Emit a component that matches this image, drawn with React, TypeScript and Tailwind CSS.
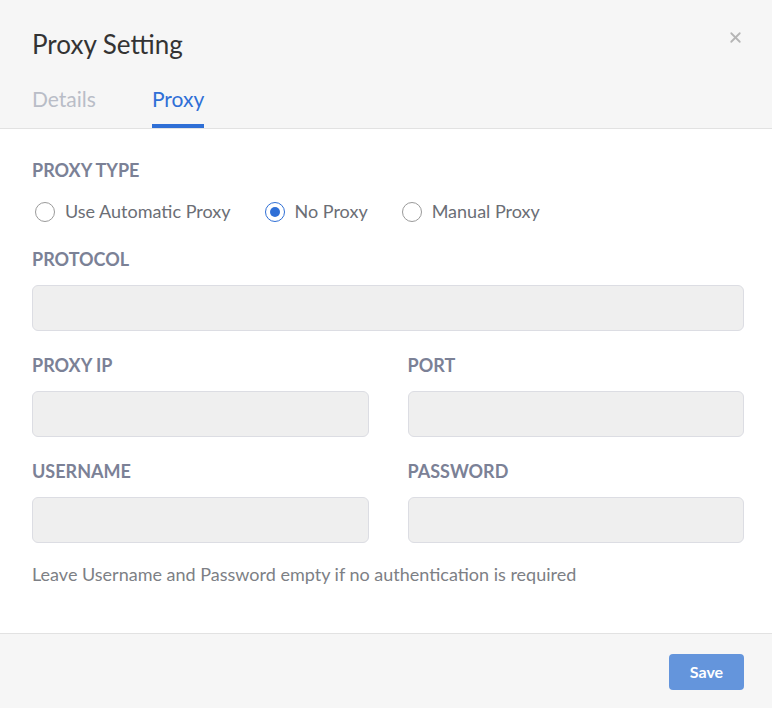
import { X } from "lucide-react";

function Radio({ label, checked }: { label: string; checked?: boolean }) {
    return (
        <label className="flex items-center gap-[10px]">
            {checked ? (
                <span className="flex size-[20px] items-center justify-center rounded-full border-[1.5px] border-[#2f6fd6] bg-white">
                    <span className="size-[10px] rounded-full bg-[#2f6fd6]" />
                </span>
            ) : (
                <span className="size-[20px] rounded-full border border-[#9a9a9a] bg-white" />
            )}
            <span className="text-[18px] leading-[27px] text-[#6b6e75]">{label}</span>
        </label>
    )
}

function Field({ label, top }: { label: string; top: string }) {
    return (
        <div className={"flex flex-col " + top}>
            <div className="text-[18px] font-bold text-[#7b8196] leading-[20px]">{label}</div>
            <div className="mt-[16px] h-[46px] rounded-[6px] border border-[#dcdde3] bg-[#efefef]" />
        </div>
    )
}

export default function App() {
    return (
        <div className="flex h-[708px] w-[772px] flex-col bg-white font-['Lato',sans-serif]">
            <div className="relative border-b border-[#e2e2e2] bg-[#f6f6f6] px-[32px] pt-[28px]">
                <h1 className="text-[26px] leading-[32px] text-[#333]">Proxy Setting</h1>
                <X className="absolute right-[28px] top-[29px] size-[17px] text-[#b5b5b5]" strokeWidth={2.5} />
                <div className="mt-[26px] flex gap-[56px]">
                    <div className="pb-[16px] text-[21px] leading-[26px] text-[#b9bdc7]">Details</div>
                    <div className="border-b-4 border-[#2f6fd6] pb-[12px] text-[21px] leading-[26px] text-[#2f6fd6]">Proxy</div>
                </div>
            </div>

            <div className="flex flex-1 flex-col pl-[32px] pr-[28px] pt-[31px]">
                <div className="text-[18px] font-bold text-[#7b8196] leading-[20px]">PROXY TYPE</div>
                <div className="mt-[18px] flex gap-[34px] pl-[3px]">
                    <Radio label="Use Automatic Proxy" />
                    <Radio label="No Proxy" checked />
                    <Radio label="Manual Proxy" />
                </div>
                <Field label="PROTOCOL" top="mt-[24px]" />
                <div className="mt-[24px] grid grid-cols-2 gap-x-[39px]">
                    <Field label="PROXY IP" top="" />
                    <Field label="PORT" top="" />
                </div>
                <div className="mt-[24px] grid grid-cols-2 gap-x-[39px]">
                    <Field label="USERNAME" top="" />
                    <Field label="PASSWORD" top="" />
                </div>
                <p className="mt-[18px] text-[18px] leading-[27px] text-[#7d7f85]">
                    Leave Username and Password empty if no authentication is required
                </p>
            </div>

            <div className="flex h-[75px] items-start justify-end border-t border-[#e2e2e2] bg-[#f6f6f6] px-[28px] pt-[20px]">
                <button className="h-[36px] w-[75px] rounded-[4px] bg-[#6495dc] text-[16px] font-bold text-white">Save</button>
            </div>
        </div>
    )
}
